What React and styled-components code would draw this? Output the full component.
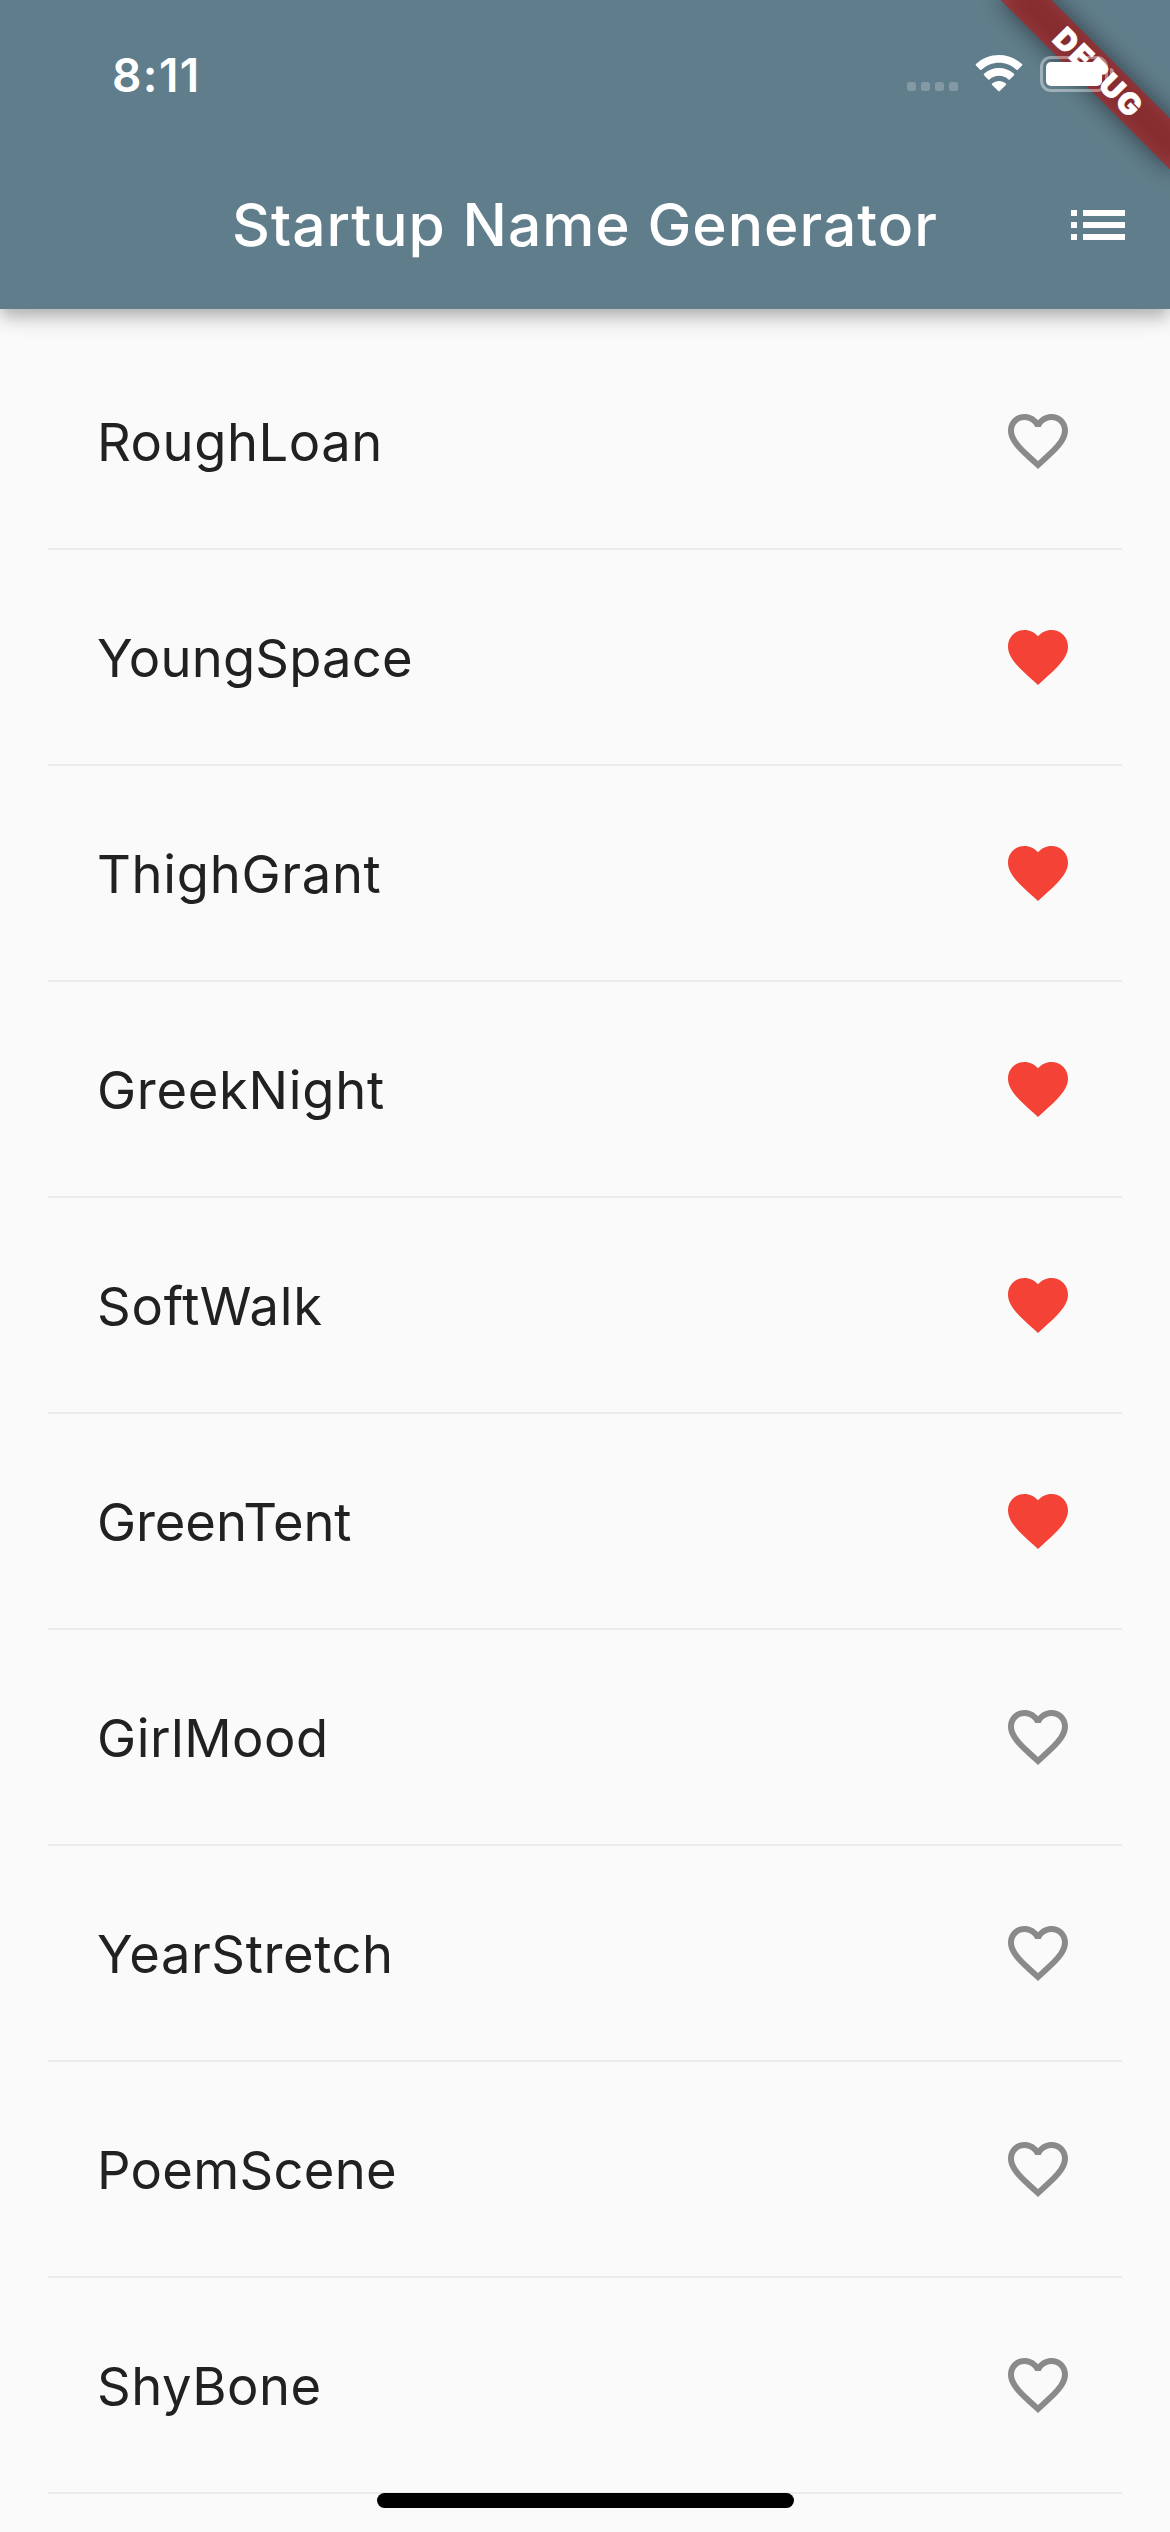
import React, { useState } from 'react';
import styled, { createGlobalStyle } from 'styled-components';

const GlobalStyle = createGlobalStyle`
  * { box-sizing: border-box; }
  body { margin: 0; background: #fafafa; font-family: Inter, Roboto, sans-serif; }
`;

const Screen = styled.div`
  position: relative;
  width: 1170px;
  height: 2532px;
  overflow: hidden;
  background: #fafafa;
`;

const Header = styled.header`
  position: relative;
  height: 309px;
  background: #607d8b;
  color: #fff;
  box-shadow: 0 6px 12px -3px rgba(0, 0, 0, 0.14), 0 12px 15px 0 rgba(0, 0, 0, 0.13),
    0 3px 30px 0 rgba(0, 0, 0, 0.1);
`;

const StatusBar = styled.div`
  display: flex;
  justify-content: space-between;
  align-items: flex-start;
  height: 141px;
  padding: 55px 56px 0 112px;
`;

const Clock = styled.span`
  position: relative;
  z-index: 2;
  font-size: 46px;
  font-weight: 600;
  line-height: 40px;
  letter-spacing: 1.4px;
`;

const StatusIcons = styled.div`
  position: relative;
  z-index: 2;
  display: flex;
`;

const Cellular = styled.div`
  display: flex;
  gap: 5px;
  padding-top: 27px;
  margin-right: 16px;
`;

const CellDot = styled.i`
  width: 9px;
  height: 9px;
  border-radius: 2.5px;
  background: rgba(255, 255, 255, 0.22);
`;

const Wifi = styled.svg`
  display: block;
  width: 50px;
  height: 37px;
  margin-right: 16px;
`;

const Battery = styled.div`
  width: 68px;
  height: 36px;
  margin-top: 1px;
  padding: 3px;
  border: 3px solid rgba(255, 255, 255, 0.4);
  border-radius: 11px;
`;

const BatteryLevel = styled.div`
  width: 56px;
  height: 24px;
  border-radius: 5px;
  background: #fff;
`;

const BatteryCap = styled.i`
  width: 4px;
  height: 12px;
  margin: 13px 0 0 2px;
  border-radius: 0 4px 4px 0;
  background: rgba(255, 255, 255, 0.45);
`;

const Toolbar = styled.div`
  display: grid;
  grid-template-columns: 144px 1fr 144px;
  align-items: center;
  height: 168px;
`;

const Title = styled.h1`
  grid-column: 2;
  margin: 0;
  text-align: center;
  font-size: 58.7px;
  font-weight: 500;
  line-height: 72px;
  letter-spacing: 1px;
  white-space: nowrap;
`;

const IconButton = styled.button`
  display: flex;
  justify-content: center;
  padding: 0;
  border: 0;
  background: none;
  color: ${(p) => p.$color || '#fff'};
`;

const Glyph = styled.svg`
  display: block;
  width: 72px;
  height: 72px;
  fill: currentColor;
`;

const Ribbon = styled.div`
  position: absolute;
  z-index: 1;
  left: 978px;
  top: 54px;
  width: 240px;
  height: 36px;
  transform: rotate(45deg);
`;

const RibbonShadow = styled.div`
  position: absolute;
  inset: 0;
  background: rgba(0, 0, 0, 0.5);
  filter: blur(12px);
`;

const RibbonLabel = styled.div`
  position: absolute;
  inset: 0;
  background: rgba(183, 28, 28, 0.627);
  text-align: center;
  font-size: 30px;
  font-weight: 900;
  line-height: 36px;
  letter-spacing: 1.6px;
  text-indent: 1.6px;
  -webkit-text-stroke: 0.6px #fff;
`;

const RibbonClip = styled.div`
  position: absolute;
  inset: 0;
  overflow: hidden;
`;

const List = styled.ul`
  margin: 0;
  padding: 48px 48px 0;
  list-style: none;
`;

const Row = styled.li`
  display: flex;
  align-items: center;
  justify-content: space-between;
  height: 168px;
  padding: 0 48px;
`;

const Name = styled.span`
  padding: 2px 0 0 1px;
  font-size: 52.5px;
  line-height: 64px;
  letter-spacing: ${(p) => p.$tracking}px;
  color: #212121;
`;

const Divider = styled.li`
  display: flex;
  align-items: center;
  height: 48px;
  &::before {
    content: '';
    flex: 1;
    height: 2px;
    background: #ebebeb;
  }
`;

const HomeIndicator = styled.div`
  position: absolute;
  left: 377px;
  bottom: 24px;
  width: 417px;
  height: 15px;
  border-radius: 8px;
  background: #000;
`;

const HEART =
  'M12 21.35l-1.45-1.32C5.4 15.36 2 12.28 2 8.5 2 5.42 4.42 3 7.5 3c1.74 0 3.41.81 4.5 2.09C13.09 3.81 14.76 3 16.5 3 19.58 3 22 5.42 22 8.5c0 3.78-3.4 6.86-8.55 11.54L12 21.35z';
const HEART_OUTLINE =
  'M16.5 3c-1.74 0-3.41.81-4.5 2.09C10.91 3.81 9.24 3 7.5 3 4.42 3 2 5.42 2 8.5c0 3.78 3.4 6.86 8.55 11.54L12 21.35l1.45-1.32C18.6 15.36 22 12.28 22 8.5 22 5.42 19.58 3 16.5 3zm-4.4 15.55l-.1.1-.1-.1C7.14 14.24 4 11.39 4 8.5 4 6.5 5.5 5 7.5 5c1.54 0 3.04.99 3.57 2.36h1.87C13.46 5.99 14.96 5 16.5 5c2 0 3.5 1.5 3.5 3.5 0 2.89-3.14 5.74-7.9 10.05z';
const LIST_ICON =
  'M3 13h2v-2H3v2zm0 4h2v-2H3v2zm0-8h2V7H3v2zm4 4h14v-2H7v2zm0 4h14v-2H7v2zM7 7v2h14V7H7z';

const SUGGESTIONS = [
  { name: 'RoughLoan', tracking: 0.55 },
  { name: 'YoungSpace', tracking: 0.2 },
  { name: 'ThighGrant', tracking: 0.7 },
  { name: 'GreekNight', tracking: 0.7 },
  { name: 'SoftWalk', tracking: 0.8 },
  { name: 'GreenTent', tracking: -0.1 },
  { name: 'GirlMood', tracking: 0.5 },
  { name: 'YearStretch', tracking: 0.6 },
  { name: 'PoemScene', tracking: 0.3 },
  { name: 'ShyBone', tracking: 0.5 },
];

export default function App() {
  const [saved, setSaved] = useState(SUGGESTIONS.slice(1, 6).map((s) => s.name));
  const toggle = (name) =>
    setSaved((s) => (s.includes(name) ? s.filter((n) => n !== name) : [...s, name]));

  return (
    <Screen>
      <GlobalStyle />
      <Header>
        <RibbonClip>
          <Ribbon>
            <RibbonShadow />
            <RibbonLabel>DEBUG</RibbonLabel>
          </Ribbon>
        </RibbonClip>
        <StatusBar>
          <Clock>8:11</Clock>
          <StatusIcons>
            <Cellular>
              <CellDot /><CellDot /><CellDot /><CellDot />
            </Cellular>
            <Wifi viewBox="0 0 50 37" fill="#fff">
              <path d="M25 7.7C31.5 7.7 37.7 10.2 42.5 14.7C42.9 15.1 43.4 15.1 43.8 14.7L48 10.5C48.4 10.1 48.4 9.5 48 9.1C35 -2.9 14.9 -2.9 2 9.1C1.6 9.5 1.6 10.1 2 10.5L6.2 14.7C6.6 15.1 7.1 15.1 7.5 14.7C12.3 10.2 18.5 7.7 25 7.7Z" />
              <path d="M25 20.8C28.5 20.8 31.9 22.1 34.5 24.5C34.9 24.8 35.4 24.8 35.8 24.5L40 20.3C40.4 19.9 40.4 19.2 40 18.8C31.6 10.9 18.4 10.9 10 18.8C9.6 19.2 9.6 19.9 10 20.3L14.2 24.5C14.6 24.8 15.1 24.8 15.5 24.5C18.1 22.1 21.5 20.8 25 20.8Z" />
              <path d="M31.9 29.9C32.3 29.5 32.3 28.9 31.8 28.6C27.9 25.1 22.1 25.1 18.2 28.6C17.7 28.9 17.7 29.5 18.1 29.9L24.3 36.1C24.7 36.5 25.3 36.5 25.7 36.1Z" />
            </Wifi>
            <Battery><BatteryLevel /></Battery>
            <BatteryCap />
          </StatusIcons>
        </StatusBar>
        <Toolbar>
          <Title>Startup Name Generator</Title>
          <IconButton aria-label="Saved names">
            <Glyph viewBox="0 0 24 24"><path d={LIST_ICON} /></Glyph>
          </IconButton>
        </Toolbar>
      </Header>
      <List>
        {SUGGESTIONS.map(({ name, tracking }) => {
          const liked = saved.includes(name);
          return (
            <React.Fragment key={name}>
              <Row>
                <Name $tracking={tracking}>{name}</Name>
                <IconButton
                  $color={liked ? '#f44336' : '#8a8a8a'}
                  aria-label={liked ? 'Remove' : 'Save'}
                  onClick={() => toggle(name)}
                >
                  <Glyph viewBox="0 0 24 24"><path d={liked ? HEART : HEART_OUTLINE} /></Glyph>
                </IconButton>
              </Row>
              <Divider aria-hidden="true" />
            </React.Fragment>
          );
        })}
      </List>
      <HomeIndicator />
    </Screen>
  );
}
